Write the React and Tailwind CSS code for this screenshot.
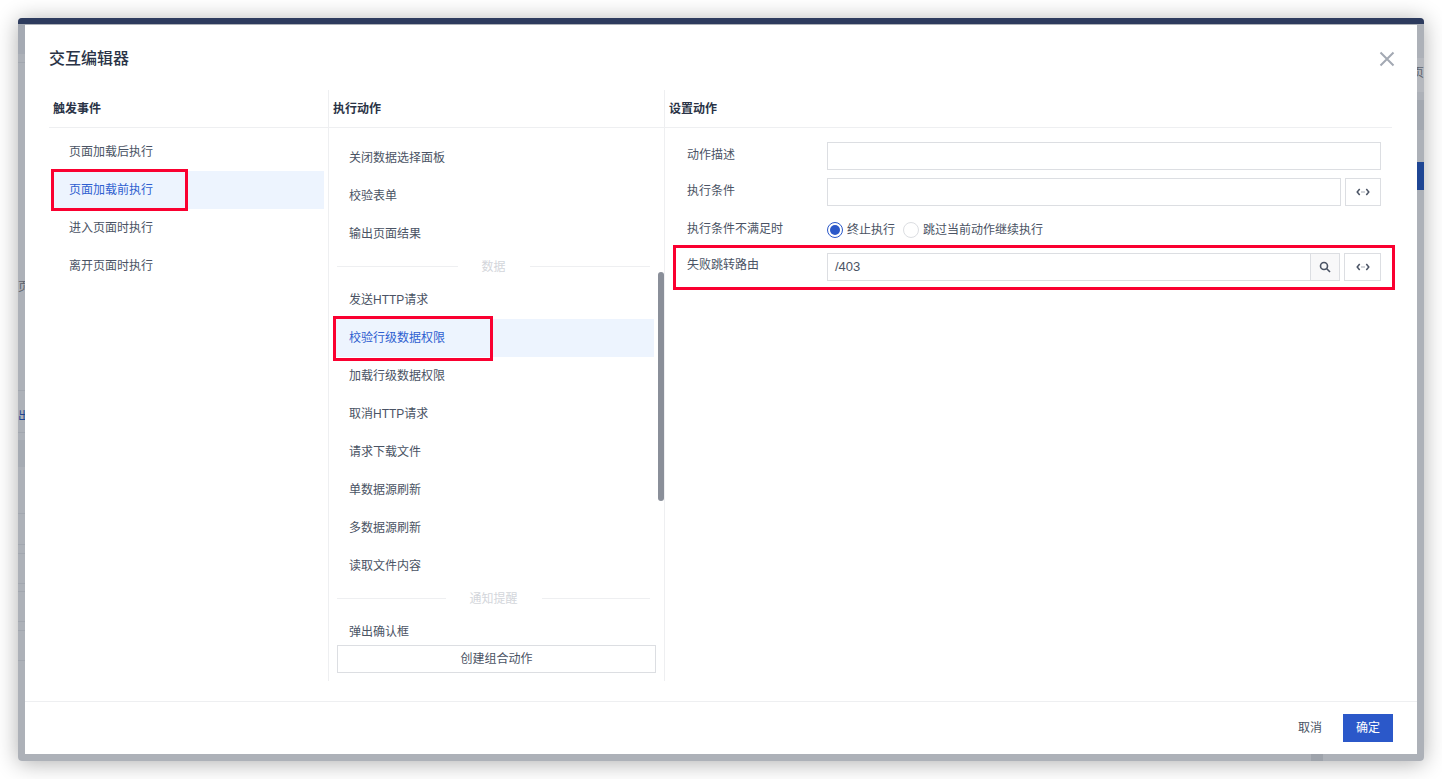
import React from "react";

const FONT = "[font-family:'Liberation_Sans','Noto_Sans_CJK_SC',sans-serif]";

function RedBox({ className }) {
  return <div className={"absolute border-[3px] border-[#fa0030] pointer-events-none " + className} />;
}

function Item({ children, active, box, pad = "pl-4" }) {
  return (
    <div className={"relative h-[38px] shrink-0 flex items-center text-xs " + pad + " " + (active ? "bg-[#edf4fe] text-[#2f5fd0]" : "text-[#4a5364]")}>
      {children}
      {box}
    </div>
  );
}

function Divider({ label }) {
  return (
    <div className="h-7 shrink-0 flex items-center text-xs text-[#d3d6db] ml-[2px] mr-1">
      <div className="h-px bg-[#eeeff1] flex-1 -mt-[2px]" />
      <span className="px-6">{label}</span>
      <div className="h-px bg-[#eeeff1] flex-1 -mt-[2px]" />
    </div>
  );
}

function CodeIcon() {
  return (
    <svg width="14" height="14" viewBox="0 0 14 14" fill="none" stroke="#4a5364" strokeWidth="1.5">
      <path d="M3.700 4 1.200 7 3.700 10" />
      <path d="M10.300 4 12.800 7 10.300 10" />
      <path d="M5.500 7h3" strokeDasharray="1 1" strokeWidth="1" />
    </svg>
  );
}

function CodeButton({ w }) {
  return (
    <div className={"h-7 shrink-0 border border-[#dcdee2] bg-white flex items-center justify-center " + w}>
      <CodeIcon />
    </div>
  );
}

function Row({ label, children, h, relative, labelClass = "-mt-[2px]" }) {
  return (
    <div className={"flex items-center " + h + (relative ? " relative" : "")}>
      <div className={"w-[140px] shrink-0 text-xs text-[#4a5364] " + labelClass}>{label}</div>
      {children}
    </div>
  );
}

function Radio({ checked, label }) {
  return (
    <div className="flex items-center gap-1 text-xs text-[#4a5364]">
      <span className={"w-4 h-4 rounded-full border flex items-center justify-center " + (checked ? "border-[#2b58c9]" : "border-[#dcdee2]")}>
        {checked && <span className="w-[10px] h-[10px] rounded-full bg-[#2b58c9]" />}
      </span>
      {label}
    </div>
  );
}

function Backdrop() {
  const left = ["top-[62px]", "top-[390px]", "top-[432px]", "top-[513px]", "top-[544px]", "top-[553px]", "top-[583px]", "top-[591px]", "top-[621px]", "top-[630px]", "top-[660px]"];
  return (
    <div className="absolute inset-0 overflow-hidden rounded-[4px] bg-[#adb1b8]">
      <div className="absolute inset-x-0 top-0 h-[6px] bg-[#2d3b5e]" />
      <div className="absolute left-0 w-[7px] top-[6px] h-[30px] bg-[#a5aab3]" />
      {left.map((c) => (
        <div key={c} className={"absolute left-0 w-[7px] h-px bg-[#a2a7af] -mt-[18px] " + c} />
      ))}
      <div className="absolute left-0 w-[7px] top-[422px] h-[27px] bg-[#a6abb3]" />
      <div className="absolute left-0 w-[7px] top-[263px] overflow-hidden text-xs leading-none text-[#5d636d]">页</div>
      <div className="absolute left-0 w-[7px] top-[392px] overflow-hidden text-xs leading-none text-[#1f4694]">出</div>
      <div className="absolute right-0 w-[7px] top-[40px] h-[34px] bg-[#b5b8be]" />
      <div className="absolute right-0 w-[7px] top-[49px] overflow-hidden text-xs leading-none text-[#5d636d]">
        <span className="block -ml-[5px]">页</span>
      </div>
      <div className="absolute right-0 w-[7px] top-[82px] h-[30px] bg-[#a3a8b0]" />
      <div className="absolute right-0 w-[7px] top-[144px] h-7 bg-[#1f4694]" />
      <div className="absolute bottom-0 left-[1293px] w-3 h-[7px] bg-[#9ea3ab]" />
    </div>
  );
}

export default function App() {
  return (
    <div className={"w-[1442px] h-[779px] bg-white p-[18px] overflow-hidden " + FONT}>
      <div className="relative w-[1406px] h-[743px] p-[7px] rounded-[4px] shadow-[0_2px_22px_rgba(0,0,0,0.32)]">
        <Backdrop />
        <div className="relative w-[1392px] h-[729px] bg-white flex flex-col">
          <div className="h-[65px] shrink-0 pl-6 pr-[22px] flex items-start justify-between">
            <div className="mt-[23px] text-base leading-[22px] font-medium text-[#2a3346]">交互编辑器</div>
            <svg className="mt-[26px]" width="16" height="16" viewBox="0 0 16 16" fill="none" stroke="#a3a9b3" strokeWidth="2">
              <path d="M1.500 1.500l13 13M14.500 1.500l-13 13" />
            </svg>
          </div>

          <div className="flex-1 ml-6 mr-[25px] flex min-h-0 h-[591px]">
            <div className="w-[280px] shrink-0 h-[591px] border-r border-[#eeeff1] flex flex-col">
              <div className="h-[38px] shrink-0 border-b border-[#eeeff1] flex items-center pt-px pl-1 text-xs font-semibold text-[#2a3346]">触发事件</div>
              <div className="pt-[5px] pl-1 pr-1 flex flex-col">
                <Item>页面加载后执行</Item>
                <Item active box={<RedBox className="-left-[2px] -top-[2px] w-[137px] h-[42px]" />}>页面加载前执行</Item>
                <Item>进入页面时执行</Item>
                <Item>离开页面时执行</Item>
              </div>
            </div>

            <div className="w-[336px] shrink-0 h-[591px] border-r border-[#eeeff1] flex flex-col relative">
              <div className="h-[38px] shrink-0 border-b border-[#eeeff1] flex items-center pt-px pl-1 text-xs font-semibold text-[#2a3346]">执行动作</div>
              <div className="h-[517px] overflow-hidden pt-[11px] pl-[6px] pr-[10px] flex flex-col">
                <Item pad="pl-[14px]">关闭数据选择面板</Item>
                <Item pad="pl-[14px]">校验表单</Item>
                <Item pad="pl-[14px]">输出页面结果</Item>
                <Divider label="数据" />
                <Item pad="pl-[14px]">发送HTTP请求</Item>
                <Item pad="pl-[14px]" active box={<RedBox className="-left-[2px] -top-[3px] w-[160px] h-[45px]" />}>校验行级数据权限</Item>
                <Item pad="pl-[14px]">加载行级数据权限</Item>
                <Item pad="pl-[14px]">取消HTTP请求</Item>
                <Item pad="pl-[14px]">请求下载文件</Item>
                <Item pad="pl-[14px]">单数据源刷新</Item>
                <Item pad="pl-[14px]">多数据源刷新</Item>
                <Item pad="pl-[14px]">读取文件内容</Item>
                <Divider label="通知提醒" />
                <Item pad="pl-[14px]">弹出确认框</Item>
              </div>
              <div className="ml-2 mr-2 h-7 shrink-0 border border-[#dcdee2] bg-white flex items-center justify-center text-xs text-[#4a5364]">创建组合动作</div>
              <div className="absolute right-0 top-[182px] w-[6px] h-[229px] rounded-[3px] bg-[#8a8f99]" />
            </div>

            <div className="flex-1 h-[591px] flex flex-col">
              <div className="h-[38px] shrink-0 border-b border-[#eeeff1] flex items-center pt-px pl-1 text-xs font-semibold text-[#2a3346]">设置动作</div>
              <div className="pl-[22px] pr-[11px] pt-[14px] flex flex-col">
                <Row label="动作描述" h="h-7 mb-2">
                  <div className="flex-1 h-7 border border-[#dcdee2] bg-white" />
                </Row>
                <Row label="执行条件" h="h-7 mb-2">
                  <div className="flex-1 h-7 border border-[#dcdee2] bg-white" />
                  <div className="w-1" />
                  <CodeButton w="w-9" />
                </Row>
                <Row label="执行条件不满足时" h="h-[31px] mb-2">
                  <div className="flex items-center gap-2">
                    <Radio checked label="终止执行" />
                    <Radio label="跳过当前动作继续执行" />
                  </div>
                </Row>
                <Row label="失败跳转路由" h="h-7" relative labelClass="-mt-[4px]">
                  <div className="flex-1 h-7 border border-[#dcdee2] bg-white flex">
                    <div className="flex-1 pl-[7px] flex items-center text-[13px] text-[#4a5364]">/403</div>
                    <div className="w-[29px] border-l border-[#dcdee2] bg-[#f8f8f9] flex items-center justify-center">
                      <svg width="12" height="12" viewBox="0 0 12 12" fill="none" stroke="#4a5364" strokeWidth="1.6">
                        <circle cx="5" cy="5" r="3.500" />
                        <path d="M7.500 7.500 11 11" />
                      </svg>
                    </div>
                  </div>
                  <div className="w-1" />
                  <CodeButton w="w-[37px]" />
                  <RedBox className="-left-[14px] -right-[14px] -top-[8px] h-[45px]" />
                </Row>
              </div>
            </div>
          </div>

          <div className="h-[53px] shrink-0 border-t border-[#eeeff1] pr-6 flex items-center justify-end mt-[20px]">
            <div className="text-xs text-[#4a5364] mr-[21px]">取消</div>
            <div className="w-[50px] h-7 bg-[#2b58c9] text-white text-xs flex items-center justify-center">确定</div>
          </div>
        </div>
      </div>
    </div>
  );
}
